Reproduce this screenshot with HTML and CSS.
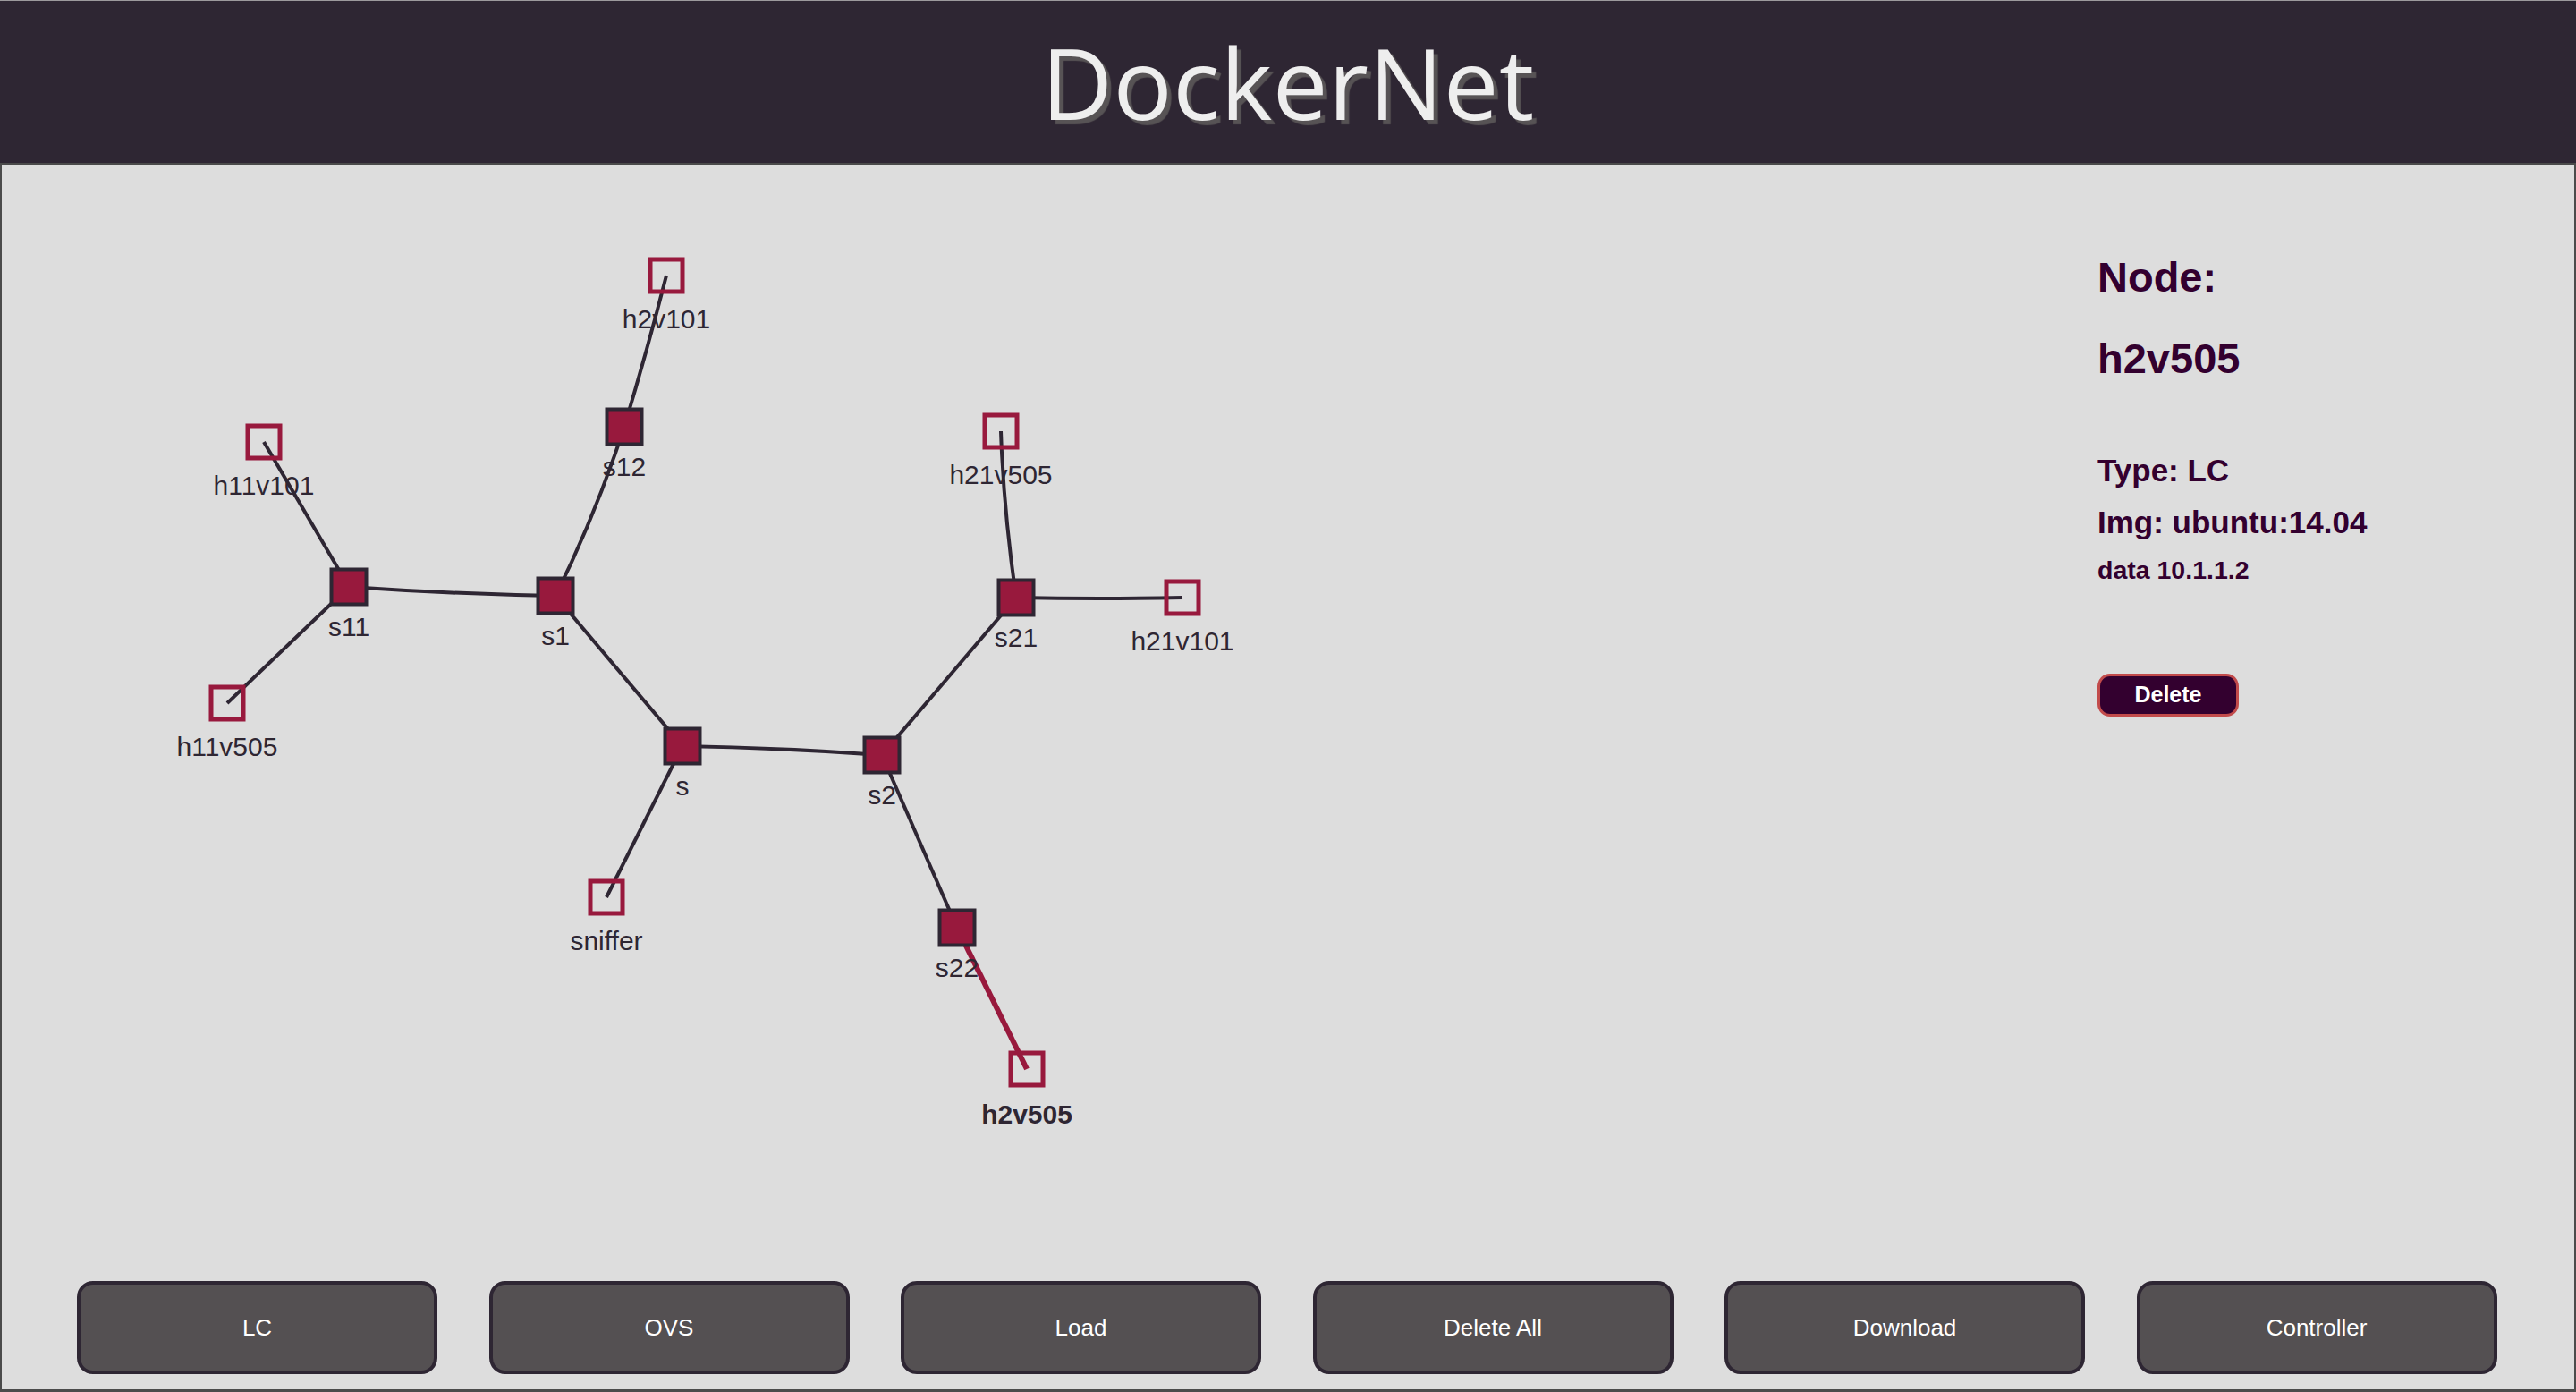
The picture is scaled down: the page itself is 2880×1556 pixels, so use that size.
FILE: index.html
```html
<!DOCTYPE html>
<html lang="en">
<head>
<meta charset="utf-8">
<title>DockerNet</title>
<link rel="stylesheet" href="styles.css">
</head>
<body>
<header class="topbar">
  <h1 class="title">DockerNet</h1>
</header>
<main class="workspace">
  <div class="stage">
    <svg class="graph" width="2343" height="1248" viewBox="2 184 2343 1248" xmlns="http://www.w3.org/2000/svg">
      <g class="links">
        <path class="link" d="M745 308 Q724 390 698 477"/>
        <path class="link" d="M698 477 Q665 578 621 666"/>
        <path class="link" d="M295 494 L390 656"/>
        <path class="link" d="M390 656 Q505 664 621 666"/>
        <path class="link" d="M254 786 L390 656"/>
        <path class="link" d="M621 666 L763 834"/>
        <path class="link" d="M763 834 Q875 836 986 844"/>
        <path class="link" d="M763 834 L678 1003"/>
        <path class="link" d="M986 844 L1136 668"/>
        <path class="link" d="M1136 668 Q1122 570 1119 482"/>
        <path class="link" d="M1136 668 Q1230 670 1322 668"/>
        <path class="link" d="M986 844 L1070 1037"/>
        <path class="link link-active" d="M1070 1037 L1148 1195"/>
      </g>
      <g class="nodes">
        <rect class="host" x="727" y="290" width="36" height="36"/>
        <rect class="switch" x="678.5" y="457.5" width="39" height="39"/>
        <rect class="host" x="277" y="476" width="36" height="36"/>
        <rect class="switch" x="370.5" y="636.5" width="39" height="39"/>
        <rect class="switch" x="601.5" y="646.5" width="39" height="39"/>
        <rect class="host" x="236" y="768" width="36" height="36"/>
        <rect class="switch" x="743.5" y="814.5" width="39" height="39"/>
        <rect class="switch" x="966.5" y="824.5" width="39" height="39"/>
        <rect class="host" x="660" y="985" width="36" height="36"/>
        <rect class="switch" x="1050.5" y="1017.5" width="39" height="39"/>
        <rect class="host" x="1130" y="1177" width="36" height="36"/>
        <rect class="host" x="1101" y="464" width="36" height="36"/>
        <rect class="switch" x="1116.5" y="648.5" width="39" height="39"/>
        <rect class="host" x="1304" y="650" width="36" height="36"/>
      </g>
      <g class="labels">
        <text class="label" x="745" y="367">h2v101</text>
        <text class="label" x="698" y="532">s12</text>
        <text class="label" x="295" y="553">h11v101</text>
        <text class="label" x="390" y="711">s11</text>
        <text class="label" x="621" y="721">s1</text>
        <text class="label" x="254" y="845">h11v505</text>
        <text class="label" x="763" y="889">s</text>
        <text class="label" x="986" y="899">s2</text>
        <text class="label" x="678" y="1062">sniffer</text>
        <text class="label" x="1070" y="1092">s22</text>
        <text class="label label-active" x="1148" y="1256">h2v505</text>
        <text class="label" x="1119" y="541">h21v505</text>
        <text class="label" x="1136" y="723">s21</text>
        <text class="label" x="1322" y="727">h21v101</text>
      </g>
    </svg>
    <aside class="info">
      <h2 class="info-heading">Node:</h2>
      <h2 class="info-name">h2v505</h2>
      <p class="info-type">Type: LC</p>
      <p class="info-img">Img: ubuntu:14.04</p>
      <p class="info-data">data 10.1.1.2</p>
      <button class="delete-btn" type="button">Delete</button>
    </aside>
  </div>
  <nav class="toolbar">
    <button class="tool-btn" type="button">LC</button>
    <button class="tool-btn" type="button">OVS</button>
    <button class="tool-btn" type="button">Load</button>
    <button class="tool-btn" type="button">Delete All</button>
    <button class="tool-btn" type="button">Download</button>
    <button class="tool-btn" type="button">Controller</button>
  </nav>
</main>
</body>
</html>
```

FILE: styles.css
```css
* {
  box-sizing: border-box;
}

html, body {
  margin: 0;
  padding: 0;
  background: #dddddd;
}

body {
  width: 2880px;
  height: 1556px;
  overflow: hidden;
  font-family: "Liberation Sans", Arial, sans-serif;
}

.topbar {
  height: 184px;
  background: #2e2633;
  border-top: 1px solid #9c9a9d;
  border-bottom: 2px solid #4a4a4a;
  padding-top: 35px;
  text-align: center;
}

.title {
  margin: 0;
  font-family: "Open Sans", "Noto Sans", sans-serif;
  font-weight: 400;
  font-size: 110px;
  line-height: 110px;
  color: #eeeeee;
  text-shadow: 5px 5px 1px #575355;
  letter-spacing: 0.5px;
}

.workspace {
  height: 1372px;
  background: #dddddd;
  border: 2px solid #4b4b4b;
  border-top: 0;
  border-bottom-width: 3px;
  display: flex;
  flex-direction: column;
}

.stage {
  height: 1248px;
  display: flex;
}

.graph {
  display: block;
  flex: 0 0 2343px;
}

.link {
  fill: none;
  stroke: #2e2633;
  stroke-width: 4;
}

.link-active {
  stroke: #98193d;
  stroke-width: 6;
}

.switch {
  fill: #98193d;
  stroke: #2e2633;
  stroke-width: 4;
}

.host {
  fill: none;
  stroke: #98193d;
  stroke-width: 5;
}

.label {
  font-family: "Liberation Sans", Arial, sans-serif;
  font-size: 30px;
  fill: #2e2633;
  text-anchor: middle;
}

.label-active {
  font-weight: bold;
}

.info {
  flex: 1;
  padding-top: 102px;
  color: #33002f;
  display: flex;
  flex-direction: column;
  align-items: flex-start;
}

.info-heading,
.info-name {
  margin: 0;
  font-size: 47px;
  line-height: 47px;
  font-weight: bold;
}

.info-name {
  margin-top: 44px;
}

.info-type,
.info-img {
  margin: 0;
  font-size: 35px;
  line-height: 35px;
  font-weight: bold;
}

.info-type {
  margin-top: 84px;
}

.info-img {
  margin-top: 23px;
}

.info-data {
  margin: 22px 0 0;
  font-size: 28.5px;
  line-height: 28.5px;
  font-weight: bold;
}

.delete-btn {
  margin-top: 101px;
  width: 158px;
  height: 48px;
  padding: 0;
  background: #33002f;
  border: 3px solid #c24b4b;
  border-radius: 14px;
  color: #ffffff;
  font-family: "Liberation Sans", Arial, sans-serif;
  font-size: 25px;
  font-weight: bold;
}

.toolbar {
  height: 104px;
  display: flex;
  gap: 57.5px;
  padding-left: 84px;
}

.tool-btn {
  flex: 0 0 403px;
  height: 104px;
  padding: 0;
  background: #545052;
  border: 4px solid #2e2633;
  border-radius: 18px;
  color: #ffffff;
  font-family: "Liberation Sans", Arial, sans-serif;
  font-size: 26px;
}
```
